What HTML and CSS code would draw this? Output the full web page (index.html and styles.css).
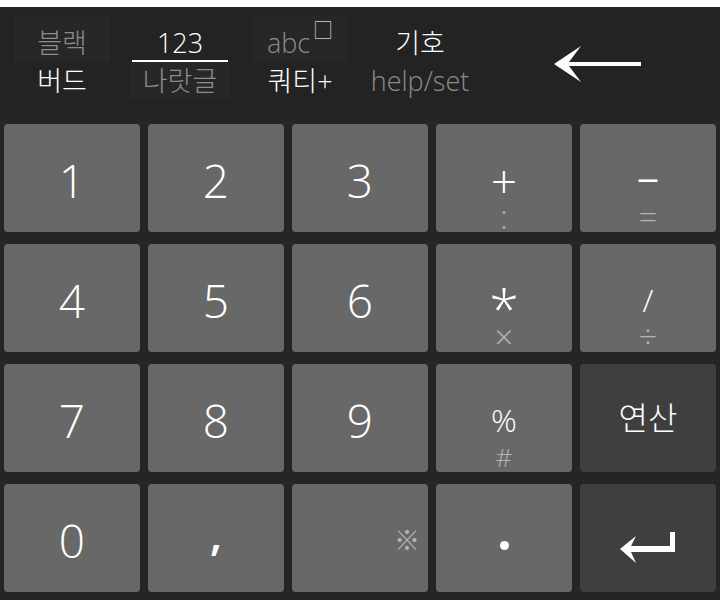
FILE: index.html
```html
<!DOCTYPE html>
<html lang="ko">

<head>
    <meta charset="UTF-8">
    <meta name="viewport" content="width=device-width, initial-scale=1.0">
    <title>Keypad</title>
    <link rel="stylesheet" href="styles.css">
</head>

<body>
    <div class="keyboard">
        <div class="modebar">
            <div class="mode">
                <span class="top dim boxed">블랙</span>
                <span class="bottom">버드</span>
            </div>
            <div class="mode">
                <span class="top active">123</span>
                <span class="bottom dim boxed">나랏글</span>
            </div>
            <div class="mode">
                <span class="top dim boxed">abc<span class="sup">□</span></span>
                <span class="bottom">쿼티+</span>
            </div>
            <div class="mode">
                <span class="top">기호</span>
                <span class="bottom dim">help/set</span>
            </div>
            <div class="backspace">
                <svg width="90" height="38" viewBox="0 0 90 38">
                    <path d="M1 19 L28 1 L16 17 L88 17 L88 21 L16 21 L28 37 Z" fill="#fff"/>
                </svg>
            </div>
        </div>

        <div class="keys">
            <div class="key"><span class="main">1</span></div>
            <div class="key"><span class="main">2</span></div>
            <div class="key"><span class="main">3</span></div>
            <div class="key"><span class="main">+</span><span class="sub">:</span></div>
            <div class="key"><span class="main minus">−</span><span class="sub">=</span></div>

            <div class="key"><span class="main">4</span></div>
            <div class="key"><span class="main">5</span></div>
            <div class="key"><span class="main">6</span></div>
            <div class="key"><span class="main star">*</span><span class="sub">×</span></div>
            <div class="key"><span class="main small">/</span><span class="sub">÷</span></div>

            <div class="key"><span class="main">7</span></div>
            <div class="key"><span class="main">8</span></div>
            <div class="key"><span class="main">9</span></div>
            <div class="key"><span class="main small">%</span><span class="sub hash">#</span></div>
            <div class="key dark"><span class="main word">연산</span></div>

            <div class="key"><span class="main">0</span></div>
            <div class="key"><span class="main comma">,</span></div>
            <div class="key side"><span class="sub">※</span></div>
            <div class="key"><span class="main"><span class="dot"></span></span></div>
            <div class="key dark">
                <span class="main enter">
                    <svg width="58" height="34" viewBox="0 0 58 34">
                        <path d="M1 18 L17 5 L12 15 L51 15 L51 1 L56 1 L56 21 L12 21 L17 32 Z" fill="#fff"/>
                    </svg>
                </span>
            </div>
        </div>
    </div>
</body>

</html>
```

FILE: styles.css
```css
body {
    margin: 0;
    background-color: #fff;
    font-family: "Open Sans", "Noto Sans CJK KR", sans-serif;
    font-weight: 300;
    color: #fff;
}

.keyboard {
    margin-top: 7px;
    height: 593px;
    background-color: #252525;
}

/* mode bar */
.modebar {
    height: 113px;
    padding: 0 4px;
    display: grid;
    grid-template-columns: 116px 120px 120px 120px 1fr;
    background-color: #232323;
}

.mode {
    display: flex;
    flex-direction: column;
    align-items: center;
    padding-top: 8px;
    font-size: 27px;
}

.mode .top {
    width: 96px;
    height: 47px;
    padding-top: 8px;
    box-sizing: border-box;
    line-height: 39px;
    text-align: center;
    white-space: nowrap;
}

.mode .bottom {
    width: 100px;
    height: 38px;
    line-height: 38px;
    text-align: center;
    white-space: nowrap;
}

.mode .active {
    border-bottom: 2px solid #fff;
}

.dim {
    color: #8c8c8c;
}

.boxed {
    background-color: #272727;
}

.sup {
    font-size: 20px;
    line-height: 0;
    color: #d0d0d0;
    vertical-align: 15px;
    margin-left: 3px;
}

.backspace {
    display: flex;
    justify-content: center;
    align-items: center;
}

/* keys */
.keys {
    margin-top: 4px;
    padding: 0 4px;
    display: grid;
    grid-template-columns: repeat(5, 136px);
    grid-template-rows: repeat(4, 108px);
    column-gap: 8px;
    row-gap: 12px;
}

.key {
    background-color: #686868;
    border-radius: 4px;
    display: flex;
    flex-direction: column;
    align-items: center;
    padding-top: 31px;
    box-sizing: border-box;
}

.key.dark {
    background-color: #3f3f3f;
}

.key .main {
    height: 50px;
    line-height: 50px;
    font-size: 46px;
}

.key .main.small {
    font-size: 32px;
}

.key .main.minus {
    font-size: 40px;
    font-weight: 400;
}

.key .main.star {
    font-size: 54px;
    transform: translateY(8px);
}

.key .main.word {
    font-size: 32px;
    transform: translateY(-2px);
}

.key .sub {
    height: 24px;
    line-height: 24px;
    font-size: 33px;
    color: #b4b4b4;
}

.key .sub.hash {
    font-size: 26px;
}

.key.side {
    align-items: flex-end;
    padding: 44px 8px 0 0;
}

.key.side .sub {
    font-size: 26px;
}

.comma {
    font-weight: 600;
    transform: translateY(-8px);
}

.dot {
    display: inline-block;
    width: 9px;
    height: 9px;
    border-radius: 50%;
    background-color: #fff;
    vertical-align: middle;
}

.enter {
    display: flex;
    align-items: flex-end;
}
```
